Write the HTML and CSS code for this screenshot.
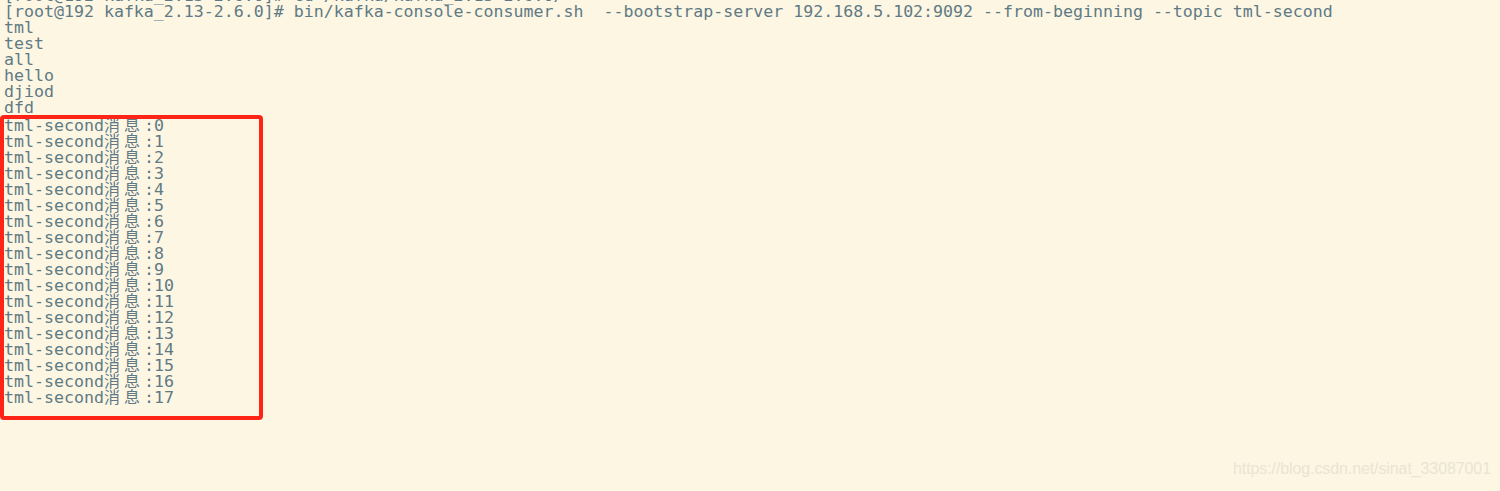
FILE: index.html
```html
<!DOCTYPE html>
<html lang="zh">
<head>
<meta charset="utf-8">
<title>kafka consumer</title>
<link rel="stylesheet" href="styles.css">
</head>
<body>
<div class="term">
  <div class="ln">[root@192 kafka_2.13-2.6.0]# cd /kafka/kafka_2.13-2.6.0/</div>
  <div class="ln">[root@192 kafka_2.13-2.6.0]# bin/kafka-console-consumer.sh  --bootstrap-server 192.168.5.102:9092 --from-beginning --topic tml-second</div>
  <div class="ln">tml</div>
  <div class="ln">test</div>
  <div class="ln">all</div>
  <div class="ln">hello</div>
  <div class="ln">djiod</div>
  <div class="ln">dfd</div>
  <div class="ln">tml-second<span class="cj">消息</span>:0</div>
  <div class="ln">tml-second<span class="cj">消息</span>:1</div>
  <div class="ln">tml-second<span class="cj">消息</span>:2</div>
  <div class="ln">tml-second<span class="cj">消息</span>:3</div>
  <div class="ln">tml-second<span class="cj">消息</span>:4</div>
  <div class="ln">tml-second<span class="cj">消息</span>:5</div>
  <div class="ln">tml-second<span class="cj">消息</span>:6</div>
  <div class="ln">tml-second<span class="cj">消息</span>:7</div>
  <div class="ln">tml-second<span class="cj">消息</span>:8</div>
  <div class="ln">tml-second<span class="cj">消息</span>:9</div>
  <div class="ln">tml-second<span class="cj">消息</span>:10</div>
  <div class="ln">tml-second<span class="cj">消息</span>:11</div>
  <div class="ln">tml-second<span class="cj">消息</span>:12</div>
  <div class="ln">tml-second<span class="cj">消息</span>:13</div>
  <div class="ln">tml-second<span class="cj">消息</span>:14</div>
  <div class="ln">tml-second<span class="cj">消息</span>:15</div>
  <div class="ln">tml-second<span class="cj">消息</span>:16</div>
  <div class="ln">tml-second<span class="cj">消息</span>:17</div>
</div>
<div class="mark-box"></div>
<div class="watermark">https://blog.csdn.net/sinat_33087001</div>
</body>
</html>
```

FILE: styles.css
```css
html, body {
  margin: 0;
  padding: 0;
  background: #fdf6e3;
  width: 1500px;
  height: 491px;
  overflow: hidden;
}
body {
  position: relative;
}
.term {
  margin-top: -12px;
  padding-left: 4px;
  font-family: "DejaVu Sans Mono", "Noto Sans CJK SC", monospace;
  font-size: 16.6px;
  line-height: 16px;
  color: #607a85;
}
.ln {
  height: 16px;
  white-space: pre;
}
.cj {
  font-family: "Noto Sans CJK SC", sans-serif;
  font-size: 16px;
  letter-spacing: 4px;
  line-height: 16px;
}
.mark-box {
  position: absolute;
  left: 0;
  top: 115px;
  width: 255px;
  height: 297px;
  border: 4px solid #ff2418;
  border-radius: 4px;
}
.watermark {
  position: absolute;
  left: 1233px;
  top: 460px;
  font-family: "Liberation Sans", Arial, sans-serif;
  font-size: 16px;
  letter-spacing: -0.1px;
  color: #ebe4d3;
}
```
